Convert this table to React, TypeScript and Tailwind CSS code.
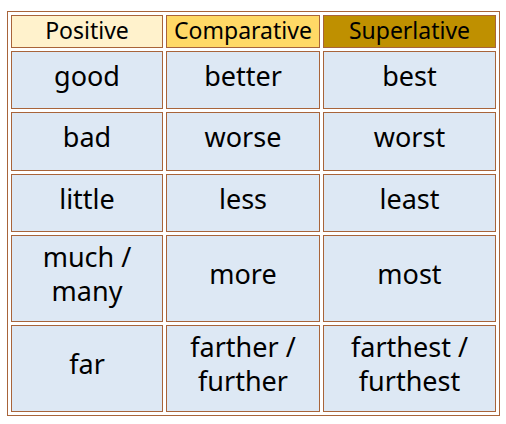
const headers = [
  { label: 'Positive', bg: 'bg-[#fff2cc]' },
  { label: 'Comparative', bg: 'bg-[#ffd966]' },
  { label: 'Superlative', bg: 'bg-[#bf9000]' },
];

const rows: { h: string; cells: string[][] }[] = [
  { h: 'h-[58px]', cells: [['good'], ['better'], ['best']] },
  { h: 'h-[59px]', cells: [['bad'], ['worse'], ['worst']] },
  { h: 'h-[58px]', cells: [['little'], ['less'], ['least']] },
  { h: 'h-[87px]', cells: [['much /', 'many'], ['more'], ['most']] },
  { h: 'h-[87px]', cells: [['far'], ['farther /', 'further'], ['farthest /', 'furthest']] },
];

export default function App() {
  return (
    <div className="w-[506px] h-[424px] bg-white" style={{ fontFamily: '"Noto Sans", "DejaVu Sans", sans-serif' }}>
      <div className="ml-[7px] pt-[11px]">
        <div className="w-[493px] border border-[#a8643a] p-[3px]">
          <div className="grid grid-cols-[152px_154px_173px] gap-[3px] text-black">
            {headers.map(h => (
              <div
                key={h.label}
                className={`h-[33px] ${h.bg} border border-[#a8643a] flex items-center justify-center pb-[3px] text-[23px] leading-none`}
              >
                {h.label}
              </div>
            ))}
            {rows.map((row, i) =>
              row.cells.map((lines, j) => (
                <div
                  key={`${i}-${j}`}
                  className={`${row.h} bg-[#dde8f4] border border-[#a8643a] flex flex-col items-center justify-center pb-[9px] text-[27px] leading-[34px]`}
                >
                  {lines.map(l => (
                    <span key={l}>{l}</span>
                  ))}
                </div>
              ))
            )}
          </div>
        </div>
      </div>
    </div>
  );
}
